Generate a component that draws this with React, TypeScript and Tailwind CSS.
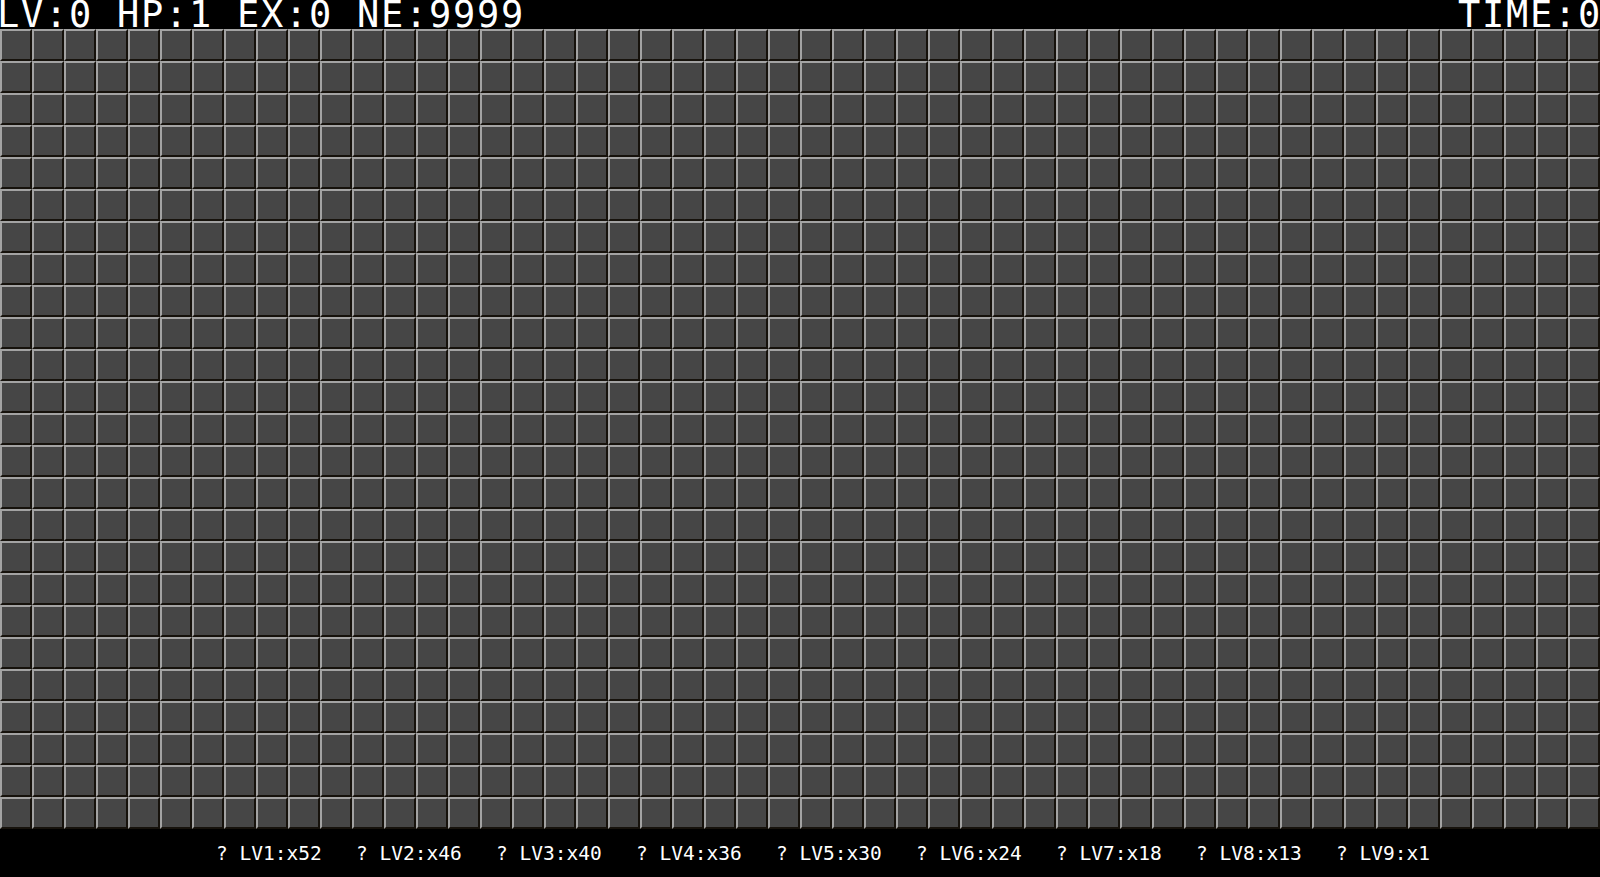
import React from "react";

const levels = [
  ["LV1", 52],
  ["LV2", 46],
  ["LV3", 40],
  ["LV4", 36],
  ["LV5", 30],
  ["LV6", 24],
  ["LV7", 18],
  ["LV8", 13],
  ["LV9", 1],
] as const;

const cells = Array.from({ length: 50 * 25 }, (_, i) => i);

export default function App() {
  return (
    <div
      className="w-[1600px] h-[877px] bg-black overflow-hidden flex flex-col text-white"
      style={{ fontFamily: '"DejaVu Sans Mono", "Liberation Mono", monospace' }}
    >
      <div className="h-[29px] flex justify-between items-start text-[37px] leading-[29px] tracking-[1.73px] whitespace-pre">
        <span className="-ml-[3px]">LV:0 HP:1 EX:0 NE:9999</span>
        <span className="-mr-[2px]">TIME:0</span>
      </div>
      <div className="grid grid-cols-[repeat(50,32px)] grid-rows-[repeat(25,32px)]">
        {cells.map((i) => (
          <div
            key={i}
            className="w-[32px] h-[32px] bg-[#464646] border-2 border-t-[#a3a3a3] border-l-[#a3a3a3] border-r-[#16120c] border-b-[#16120c]"
          />
        ))}
      </div>
      <div className="h-[48px] flex items-start pl-[216px] pt-[2px] text-[19.5px] leading-[46px] whitespace-pre">
        {levels.map(([lv, n]) => (
          <span key={lv} className="w-[140px] shrink-0">
            {`? ${lv}:x${n}`}
          </span>
        ))}
      </div>
    </div>
  );
}
